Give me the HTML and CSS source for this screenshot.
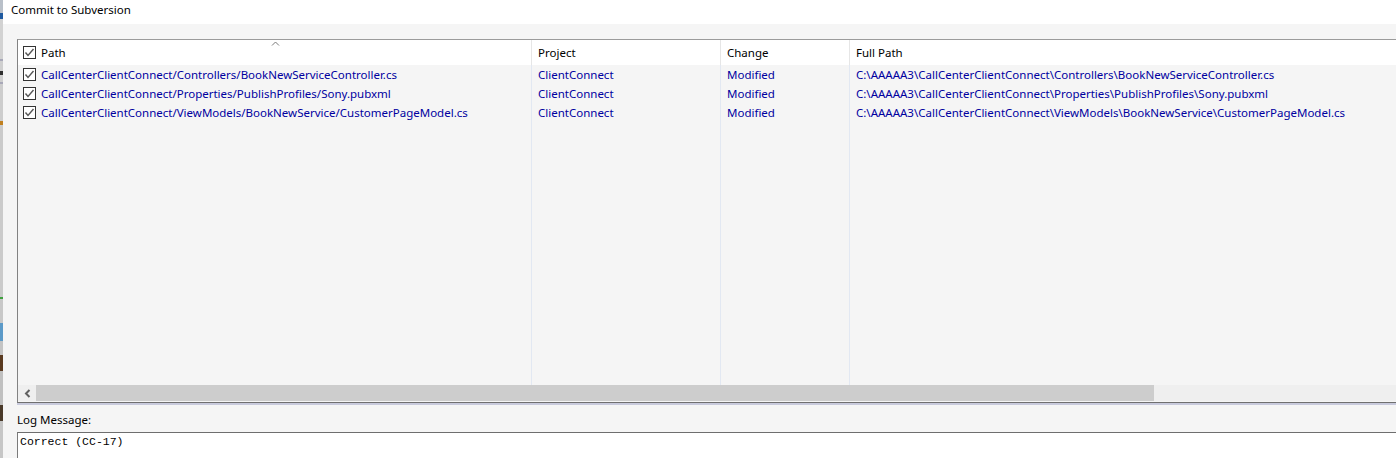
FILE: index.html
```html
<!DOCTYPE html>
<html>
<head>
<meta charset="utf-8">
<link rel="stylesheet" href="styles.css">
</head>
<body>
<div class="screen">
  <div class="bgstrip">
    <div class="m m-a"></div>
    <div class="m m-blue"></div>
    <div class="m m-b"></div>
    <div class="m m-line"></div>
    <div class="m m-c"></div>
    <div class="m m-dark"></div>
    <div class="m m-d"></div>
    <div class="m m-line"></div>
    <div class="m m-e"></div>
    <div class="m m-orange"></div>
    <div class="m m-f"></div>
    <div class="m m-green"></div>
    <div class="m m-g"></div>
    <div class="m m-lblue"></div>
    <div class="m m-h"></div>
    <div class="m m-brown"></div>
    <div class="m m-i"></div>
    <div class="m m-brown2"></div>
    <div class="m m-j"></div>
  </div>
  <div class="dialog">
    <div class="titlebar">Commit to Subversion</div>
    <div class="body">
      <div class="list">
        <div class="grid">
          <div class="hcell first">
            <svg class="cb" width="13" height="13" viewBox="0 0 13 13"><rect x="0.5" y="0.5" width="12" height="12" fill="#fff" stroke="#333"/><polyline points="2.5,6.5 5,9.5 10.5,3" fill="none" stroke="#555" stroke-width="1.4"/></svg>
            <span>Path</span>
            <svg class="sort" width="9" height="5" viewBox="0 0 9 5"><polyline points="1,4.5 4.5,1 8,4.5" fill="none" stroke="#7a7a7a" stroke-width="1"/></svg>
          </div>
          <div class="hcell">Project</div>
          <div class="hcell">Change</div>
          <div class="hcell last">Full Path</div>

          <div class="cell first">
            <svg class="cb" width="13" height="13" viewBox="0 0 13 13"><rect x="0.5" y="0.5" width="12" height="12" fill="#fff" stroke="#333"/><polyline points="2.5,6.5 5,9.5 10.5,3" fill="none" stroke="#555" stroke-width="1.4"/></svg>
            <span>CallCenterClientConnect/Controllers/BookNewServiceController.cs</span>
          </div>
          <div class="cell">ClientConnect</div>
          <div class="cell">Modified</div>
          <div class="cell last">C:\AAAAA3\CallCenterClientConnect\Controllers\BookNewServiceController.cs</div>

          <div class="cell first">
            <svg class="cb" width="13" height="13" viewBox="0 0 13 13"><rect x="0.5" y="0.5" width="12" height="12" fill="#fff" stroke="#333"/><polyline points="2.5,6.5 5,9.5 10.5,3" fill="none" stroke="#555" stroke-width="1.4"/></svg>
            <span>CallCenterClientConnect/Properties/PublishProfiles/Sony.pubxml</span>
          </div>
          <div class="cell">ClientConnect</div>
          <div class="cell">Modified</div>
          <div class="cell last">C:\AAAAA3\CallCenterClientConnect\Properties\PublishProfiles\Sony.pubxml</div>

          <div class="cell first">
            <svg class="cb" width="13" height="13" viewBox="0 0 13 13"><rect x="0.5" y="0.5" width="12" height="12" fill="#fff" stroke="#333"/><polyline points="2.5,6.5 5,9.5 10.5,3" fill="none" stroke="#555" stroke-width="1.4"/></svg>
            <span>CallCenterClientConnect/ViewModels/BookNewService/CustomerPageModel.cs</span>
          </div>
          <div class="cell">ClientConnect</div>
          <div class="cell">Modified</div>
          <div class="cell last">C:\AAAAA3\CallCenterClientConnect\ViewModels\BookNewService\CustomerPageModel.cs</div>

          <div class="fill"></div>
          <div class="fill"></div>
          <div class="fill"></div>
          <div class="fill last"></div>
        </div>
        <div class="hscroll">
          <div class="arrow">
            <svg width="7" height="9" viewBox="0 0 7 9"><polyline points="5.5,1 2,4.5 5.5,8" fill="none" stroke="#606060" stroke-width="2"/></svg>
          </div>
          <div class="thumb"></div>
          <div class="track"></div>
        </div>
      </div>
      <div class="list-shadow"></div>
      <div class="log-label">Log Message:</div>
      <div class="log-box">Correct (CC-17)</div>
    </div>
  </div>
</div>
</body>
</html>
```

FILE: styles.css
```css
html, body {
  margin: 0;
  padding: 0;
}
body {
  width: 1396px;
  height: 458px;
  overflow: hidden;
  background: #f5f5f5;
  font-family: "Noto Sans", "Open Sans", sans-serif;
  font-size: 11.5px;
  color: #000;
}
.screen {
  display: flex;
  width: 1396px;
  height: 458px;
}
.bgstrip {
  width: 3px;
  flex: none;
  display: flex;
  flex-direction: column;
  background: #c9c9c9;
}
.m { width: 3px; flex: none; }
.m-a { height: 13px; background: #b9c0c9; }
.m-blue { height: 6px; background: #1f5aa0; }
.m-b { height: 40px; background: #d2d2d2; }
.m-line { height: 2px; background: #a8a8b8; }
.m-c { height: 10px; background: #cfcfcf; }
.m-dark { height: 4px; background: #303030; }
.m-d { height: 7px; background: #cfcfcf; }
.m-e { height: 37px; background: #cdcdcd; }
.m-orange { height: 4px; background: #c08020; }
.m-f { height: 172px; background: #cbcbcb; }
.m-green { height: 2px; background: #40a040; }
.m-g { height: 24px; background: #c8c8c8; }
.m-lblue { height: 18px; background: #5c9ac8; }
.m-h { height: 14px; background: #c4c4c4; }
.m-brown { height: 16px; background: #5a3a20; }
.m-i { height: 34px; background: #c0c0c0; }
.m-brown2 { height: 16px; background: #4a3a2a; }
.m-j { height: 40px; background: #c6c6c6; }

.dialog {
  flex: 1;
  display: flex;
  flex-direction: column;
  min-width: 0;
}
.titlebar {
  height: 24px;
  flex: none;
  background: #fff;
  padding-left: 8px;
  line-height: 20px;
  font-size: 11.5px;
  white-space: nowrap;
}
.body {
  flex: 1;
  background: #f5f5f5;
  padding: 15px 0 0 14px;
  display: flex;
  flex-direction: column;
  min-height: 0;
}
.list {
  border-top: 1px solid #9b9b9b;
  border-left: 1px solid #828282;
  border-bottom: 1px solid #6f6f6f;
  background: #f5f5f5;
  display: flex;
  flex-direction: column;
  height: 364px;
  flex: none;
  box-sizing: border-box;
}
.grid {
  display: grid;
  grid-template-columns: 514px 189px 129px 1fr;
  grid-template-rows: 25px 19px 19px 19px 1fr;
  height: 345px;
  flex: none;
}
.hcell, .cell, .fill {
  border-right: 1px solid #e2e8f2;
  white-space: nowrap;
  overflow: hidden;
  display: flex;
  align-items: center;
  padding-left: 6px;
}
.hcell {
  background: #fff;
  border-right-color: #e6e6e6;
  position: relative;
}
.cell {
  color: #0000a0;
}
.first {
  padding-left: 5px;
}
.last {
  border-right: none;
}
.cb {
  flex: none;
  margin-right: 5px;
}
.sort {
  position: absolute;
  left: 253px;
  top: 1px;
}
.hscroll {
  height: 16px;
  flex: none;
  display: flex;
  background: #efefef;
  margin-bottom: 1px;
}
.arrow {
  width: 18px;
  flex: none;
  display: flex;
  align-items: center;
  justify-content: center;
}
.thumb {
  width: 1118px;
  flex: none;
  background: #cdcdcd;
}
.track {
  flex: 1;
}
.list-shadow {
  height: 2px;
  flex: none;
  background: #c8cadc;
}
.log-label {
  height: 27px;
  flex: none;
  padding-top: 6px;
  box-sizing: border-box;
  line-height: 18px;
}
.log-box {
  flex: 1;
  background: #fff;
  border-top: 1px solid #6e6e6e;
  border-left: 1px solid #7a7a7a;
  padding-left: 2px;
  font-family: "Liberation Mono", "DejaVu Sans Mono", monospace;
  font-size: 11.5px;
  line-height: 17px;
  color: #000;
}
```
